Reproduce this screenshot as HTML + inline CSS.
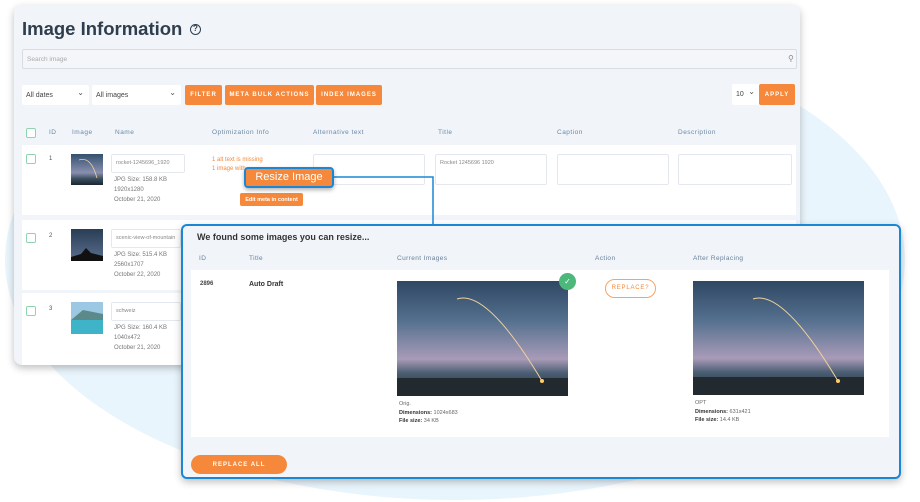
<!DOCTYPE html>
<html><head><meta charset="utf-8">
<style>
*{margin:0;padding:0;box-sizing:border-box}
body{width:920px;height:502px;overflow:hidden;background:#fff;font-family:"Liberation Sans",sans-serif;position:relative}
.abs{position:absolute}
.circle{position:absolute;left:5px;top:20px;width:900px;height:480px;border-radius:50%;background:#e9f5fc}
.card{position:absolute;left:14px;top:5px;width:786px;height:360px;background:#f1f5fa;border-radius:8px;box-shadow:0 3px 8px rgba(0,0,0,.25);overflow:hidden}
.t{position:absolute;white-space:nowrap}
.btn{position:absolute;background:#f5883a;color:#fff;font-size:6px;font-weight:bold;letter-spacing:1px;display:flex;align-items:center;justify-content:center;border-radius:2px}
.sel{position:absolute;background:#fff;font-size:7px;color:#444;padding-left:4px;display:flex;align-items:center;border-radius:2px}
.sel:after{content:"⌄";position:absolute;right:5px;top:3px;font-size:8px;color:#555}
.hd{position:absolute;font-size:6.5px;color:#6a88a6;letter-spacing:.5px}
.cb{position:absolute;width:10px;height:10px;border:1.2px solid #8fd4b0;border-radius:2px;background:#fff}
.row{position:absolute;left:8px;width:774px;background:#fff}
.inp{position:absolute;background:#fff;border:1px solid #e4e8ee;border-radius:2px;font-size:5.5px;color:#888;padding:5px 4px}
.sm{font-size:6px;color:#777;line-height:10px}
.pop{position:absolute;left:181px;top:224px;width:720px;height:255px;background:#f1f5fa;border:2px solid #1a87d6;border-radius:6px;box-shadow:0 3px 8px rgba(0,0,0,.25)}
.ph{position:absolute;font-size:6.5px;color:#66809a;letter-spacing:.4px}
.cap{position:absolute;font-size:5.5px;color:#666;line-height:8.5px}
.cap b{color:#333}
</style></head><body>
<div class="circle"></div>
<div class="card">
  <div class="t" style="left:8px;top:13px;font-size:18.5px;font-weight:bold;color:#2f3e4e">Image Information</div>
  <div class="abs" style="left:176px;top:19px;width:11px;height:11px;border:1.5px solid #2f3e4e;border-radius:50%;font-size:8px;font-weight:bold;text-align:center;line-height:8px;color:#2f3e4e">?</div>
  <div class="abs" style="left:8px;top:44px;width:775px;height:20px;background:#f4f6f9;border:1px solid #d8dde3;border-radius:2px;font-size:6.5px;color:#aaa;padding:6px 4px">Search image</div>
  <div class="abs" style="left:774px;top:49px;font-size:8px;color:#888">⚲</div>
  <div class="sel" style="left:8px;top:80px;width:67px;height:20px">All dates</div>
  <div class="sel" style="left:78px;top:80px;width:89px;height:20px">All images</div>
  <div class="btn" style="left:171px;top:80px;width:37px;height:20px">FILTER</div>
  <div class="btn" style="left:211px;top:80px;width:89px;height:20px">META BULK ACTIONS</div>
  <div class="btn" style="left:302px;top:80px;width:66px;height:20px">INDEX IMAGES</div>
  <div class="sel" style="left:718px;top:79px;width:28px;height:21px;font-size:7px">10</div>
  <div class="btn" style="left:745px;top:79px;width:36px;height:21px">APPLY</div>

  <div class="cb" style="left:12px;top:123px"></div>
  <div class="hd" style="left:35px;top:124px">ID</div>
  <div class="hd" style="left:58px;top:124px">Image</div>
  <div class="hd" style="left:101px;top:124px">Name</div>
  <div class="hd" style="left:198px;top:124px">Optimization Info</div>
  <div class="hd" style="left:299px;top:124px">Alternative text</div>
  <div class="hd" style="left:424px;top:124px">Title</div>
  <div class="hd" style="left:543px;top:124px">Caption</div>
  <div class="hd" style="left:664px;top:124px">Description</div>

  <div class="row" style="top:140px;height:70px"></div>
  <div class="cb" style="left:12px;top:149px"></div>
  <div class="t" style="left:35px;top:151px;font-size:6px;color:#555">1</div>
  <svg class="abs" style="left:57px;top:149px" width="32" height="31"><defs><linearGradient id="g1" x1="0" y1="0" x2="0" y2="1"><stop offset="0" stop-color="#34506e"/><stop offset=".6" stop-color="#8a8fb0"/><stop offset=".8" stop-color="#3b4f5e"/><stop offset="1" stop-color="#1b2630"/></linearGradient></defs><rect width="32" height="31" fill="url(#g1)"/><path d="M8 6 Q20 2 26 24" stroke="#f3d49a" stroke-width=".8" fill="none"/></svg>
  <div class="inp" style="left:97px;top:149px;width:74px;height:19px">rocket-1245696_1920</div>
  <div class="t sm" style="left:100px;top:170px">JPG Size: 158.8 KB<br>1920x1280<br>October 21, 2020</div>
  <div class="t" style="left:198px;top:151px;font-size:6px;color:#f5883a;line-height:9px">1 alt text is missing<br>1 image with</div>
  <div class="inp" style="left:299px;top:149px;width:112px;height:31px"></div>
  <div class="inp" style="left:421px;top:149px;width:112px;height:31px">Rocket 1245696 1920</div>
  <div class="inp" style="left:543px;top:149px;width:112px;height:31px"></div>
  <div class="inp" style="left:664px;top:149px;width:114px;height:31px"></div>
  <div class="btn" style="left:226px;top:188px;width:63px;height:13px;letter-spacing:0;font-size:5.5px">Edit meta in content</div>

  <div class="row" style="top:215px;height:70px"></div>
  <div class="cb" style="left:12px;top:228px"></div>
  <div class="t" style="left:35px;top:228px;font-size:6px;color:#555">2</div>
  <svg class="abs" style="left:57px;top:224px" width="32" height="32"><defs><linearGradient id="g2" x1="0" y1="0" x2="0" y2="1"><stop offset="0" stop-color="#2a3d55"/><stop offset="1" stop-color="#5a7090"/></linearGradient></defs><rect width="32" height="32" fill="url(#g2)"/><path d="M0 28 L10 25 L15 19 L20 24 L32 27 L32 32 L0 32Z" fill="#111"/></svg>
  <div class="inp" style="left:97px;top:224px;width:70px;height:19px">scenic-view-of-mountain</div>
  <div class="t sm" style="left:100px;top:245px">JPG Size: 515.4 KB<br>2560x1707<br>October 22, 2020</div>

  <div class="row" style="top:288px;height:72px"></div>
  <div class="cb" style="left:12px;top:301px"></div>
  <div class="t" style="left:35px;top:301px;font-size:6px;color:#555">3</div>
  <svg class="abs" style="left:57px;top:297px" width="32" height="32"><rect width="32" height="32" fill="#9cc8e4"/><path d="M0 18 L12 8 L32 12 L32 20 L0 20Z" fill="#5c8a8a"/><rect y="18" width="32" height="14" fill="#3fb4c8"/></svg>
  <div class="inp" style="left:97px;top:297px;width:70px;height:19px">schweiz</div>
  <div class="t sm" style="left:100px;top:318px">JPG Size: 160.4 KB<br>1040x472<br>October 21, 2020</div>
</div>

<svg class="abs" style="left:330px;top:170px" width="110" height="60"><path d="M2 7 H103 V56" stroke="#1a87d6" stroke-width="1.5" fill="none"/></svg>
<div class="abs" style="left:244px;top:167px;width:90px;height:21px;background:#f5883a;border:2px solid #1a87d6;border-radius:4px;color:#fff;font-size:11px;text-align:center;line-height:17px;box-shadow:0 2px 4px rgba(0,0,0,.3)">Resize Image</div>

<div class="pop">
  <div class="t" style="left:14px;top:6px;font-size:9px;font-weight:bold;color:#333">We found some images you can resize...</div>
  <div class="ph" style="left:16px;top:29px">ID</div>
  <div class="ph" style="left:66px;top:29px">Title</div>
  <div class="ph" style="left:214px;top:29px">Current Images</div>
  <div class="ph" style="left:412px;top:29px">Action</div>
  <div class="ph" style="left:510px;top:29px">After Replacing</div>
  <div class="abs" style="left:8px;top:44px;width:698px;height:167px;background:#fff"></div>
  <div class="t" style="left:17px;top:55px;font-size:6px;color:#444;font-weight:bold">2896</div>
  <div class="t" style="left:66px;top:55px;font-size:7px;color:#333;font-weight:bold">Auto Draft</div>
  <svg class="abs" style="left:214px;top:55px" width="171" height="115"><defs><linearGradient id="g3" x1="0" y1="0" x2="0" y2="1"><stop offset="0" stop-color="#2f4763"/><stop offset=".35" stop-color="#55718f"/><stop offset=".68" stop-color="#a89bb8"/><stop offset=".8" stop-color="#4b5e73"/><stop offset="1" stop-color="#1e2730"/></linearGradient></defs><rect width="171" height="115" fill="url(#g3)"/><rect y="97" width="171" height="18" fill="#222a30"/><path d="M60 18 Q90 8 145 100" stroke="#f1d29a" stroke-width="1" fill="none"/><circle cx="145" cy="100" r="2" fill="#ffcc66"/></svg>
  <div class="abs" style="left:376px;top:47px;width:17px;height:17px;border-radius:50%;background:#4cb87a;color:#fff;font-size:8px;text-align:center;line-height:17px">✓</div>
  <div class="abs" style="left:422px;top:53px;width:51px;height:19px;border:1px solid #f5a36a;border-radius:10px;color:#f5883a;font-size:6px;letter-spacing:.8px;text-align:center;line-height:17px">REPLACE?</div>
  <svg class="abs" style="left:510px;top:55px" width="171" height="114"><rect width="171" height="114" fill="url(#g3)"/><rect y="96" width="171" height="18" fill="#222a30"/><path d="M60 18 Q90 8 145 100" stroke="#f1d29a" stroke-width="1" fill="none"/><circle cx="145" cy="100" r="2" fill="#ffcc66"/></svg>
  <div class="cap" style="left:216px;top:174px">Orig.<br><b>Dimensions:</b> 1024x683<br><b>File size:</b> 34 KB</div>
  <div class="cap" style="left:512px;top:173px">OPT<br><b>Dimensions:</b> 631x421<br><b>File size:</b> 14.4 KB</div>
  <div class="btn" style="left:8px;top:229px;width:96px;height:19px;border-radius:10px;font-size:6px">REPLACE ALL</div>
</div>
</body></html>
